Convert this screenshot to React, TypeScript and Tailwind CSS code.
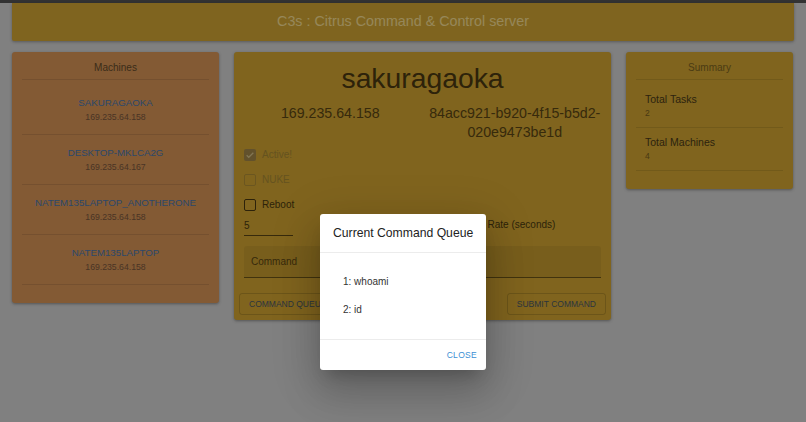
import React from "react";

const machines = [
  { name: "SAKURAGAOKA", ip: "169.235.64.158" },
  { name: "DESKTOP-MKLCA2G", ip: "169.235.64.167" },
  { name: "NATEM135LAPTOP_ANOTHERONE", ip: "169.235.64.158" },
  { name: "NATEM135LAPTOP", ip: "169.235.64.158" },
];

function Check({ checked, muted }: { checked?: boolean; muted?: boolean }) {
  if (checked) {
    return (
      <span className="w-[12px] h-[12px] rounded-[2px] bg-[#a3884a] flex items-center justify-center">
        <svg width="10" height="10" viewBox="0 0 24 24">
          <path d="M4 12.5l5 5L20 6.5" fill="none" stroke="#d9c48a" strokeWidth="3" />
        </svg>
      </span>
    );
  }
  return (
    <span
      className={
        "w-[12px] h-[12px] rounded-[2px] border-[1.5px] " +
        (muted ? "border-[#b39036]" : "border-[#4b3a11]")
      }
    />
  );
}

export default function App() {
  return (
    <div className="relative min-h-screen bg-[#d5d5d5] font-['Liberation_Sans',Arial,sans-serif]">
      <div className="h-[3px] bg-[#545454]" />
      <div className="px-3">
        <header className="h-[38px] bg-[#d4a735] shadow-[0_1px_3px_rgba(0,0,0,0.3)] rounded-b-[2px] flex items-center justify-center text-[14.3px] text-[#fae196]">
          C3s : Citrus Command &amp; Control server
        </header>

        <div className="mt-[11px] flex items-start gap-[15px]">
          {/* Machines */}
          <section className="w-[207px] bg-[#da9658] rounded-[3px] shadow-[0_1px_3px_rgba(0,0,0,0.35)] px-[10px] pb-[18px]">
            <div className="pt-[10px] pb-[5px] leading-[12px] text-[10px] text-center text-[#644b2a] border-b border-black/10">
              Machines
            </div>
            <ul className="pt-[5px]">
              {machines.map((m) => (
                <li
                  key={m.name}
                  className="h-[50px] pt-[11px] border-b border-black/10 text-center"
                >
                  <div className="text-[9.7px] leading-[14px] text-[#4a78b0]">{m.name}</div>
                  <div className="text-[8.7px] leading-[14px] text-[#7a583e]">{m.ip}</div>
                </li>
              ))}
            </ul>
          </section>

          {/* Main */}
          <section className="w-[377px] bg-[#d5a732] rounded-[3px] shadow-[0_1px_3px_rgba(0,0,0,0.35)]">
            <div className="px-[10px] pt-[10px] pb-[10px]">
              <h1 className="text-[28.3px] leading-[32px] text-center text-[#4b3a11]">sakuragaoka</h1>
              <div className="mt-[10px] -mx-[6px] grid grid-cols-2 text-[14.2px] leading-[19px] text-[#5c4614] text-center">
                <div>169.235.64.158</div>
                <div>
                  84acc921-b920-4f15-b5d2-
                  <br />
                  020e9473be1d
                </div>
              </div>
              <div className="text-[10px]">
                <label className="h-[25px] flex items-center gap-[6px] text-[#a98a35]">
                  <Check checked />
                  Active!
                </label>
                <label className="h-[25px] flex items-center gap-[6px] text-[#a98a35]">
                  <Check muted />
                  NUKE
                </label>
                <label className="h-[25px] flex items-center gap-[6px] text-[#4b3a11]">
                  <Check />
                  Reboot
                </label>
              </div>
              <div className="grid grid-cols-2 items-start">
                <div className="w-[49px] h-[19px] pt-[2px] border-b border-[#5c4614] text-[10px] leading-[14px] text-[#4b3a11]">
                  5
                </div>
                <div className="pt-[2px] text-center text-[10px] leading-[12px] text-[#4b3a11]">
                  Poll Rate (seconds)
                </div>
              </div>
              <div className="mt-[10px] h-[32px] px-[7px] flex items-center bg-black/[0.06] rounded-t-[3px] border-b border-[#6d5518] text-[10px] text-[#5c4614]">
                Command
              </div>
            </div>
            <div className="p-[5px] flex justify-between">
              <button className="h-[22px] px-[9px] border border-black/15 rounded-[3px] text-[8.5px] text-[#4a5968] uppercase">
                Command Queue
              </button>
              <button className="h-[22px] px-[9px] border border-black/15 rounded-[3px] text-[8.5px] text-[#4a5968] uppercase">
                Submit Command
              </button>
            </div>
          </section>

          {/* Summary */}
          <section className="w-[167px] bg-[#d5a732] rounded-[3px] shadow-[0_1px_3px_rgba(0,0,0,0.35)] px-[10px] pb-[18px]">
            <div className="pt-[10px] pb-[5px] leading-[12px] text-[10px] text-center text-[#7d6421] border-b border-black/10">
              Summary
            </div>
            <ul className="pt-[6px]">
              <li className="pt-[6px] pb-[7px] px-[9px] border-b border-black/10">
                <div className="text-[10.5px] leading-[14px] text-[#4b3a19]">Total Tasks</div>
                <div className="text-[8.5px] leading-[14px] text-[#7a5f20]">2</div>
              </li>
              <li className="pt-[7px] pb-[7px] px-[9px] border-b border-black/10">
                <div className="text-[10.5px] leading-[14px] text-[#4b3a19]">Total Machines</div>
                <div className="text-[8.5px] leading-[14px] text-[#7a5f20]">4</div>
              </li>
            </ul>
          </section>
        </div>
      </div>

      {/* Modal */}
      <div className="absolute inset-0 bg-black/40 flex justify-center items-start pt-[214px]">
        <div className="w-[166px] bg-white rounded-[3px] shadow-[0_11px_15px_-7px_rgba(0,0,0,0.2),0_24px_38px_3px_rgba(0,0,0,0.14),0_9px_46px_8px_rgba(0,0,0,0.12)]">
          <div className="h-[39px] pl-[13px] flex items-center text-[12.2px] text-[#222] border-b border-[#ececec]">
            Current Command Queue
          </div>
          <div className="pt-[22px] pb-[22px] pl-[23px] flex flex-col gap-[14px] text-[10px] leading-[14px] text-[#333]">
            <div>1: whoami</div>
            <div>2: id</div>
          </div>
          <div className="h-[31px] border-t border-[#ececec] flex items-center justify-end pr-[9px]">
            <button className="text-[8.5px] tracking-[0.3px] text-[#3b8fd4] uppercase">Close</button>
          </div>
        </div>
      </div>
    </div>
  );
}
